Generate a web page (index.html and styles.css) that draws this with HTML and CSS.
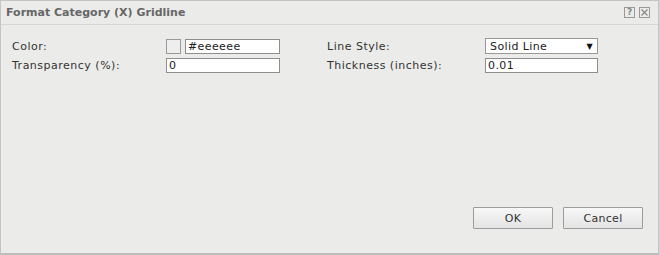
FILE: index.html
```html
<!DOCTYPE html>
<html lang="en">
  <head>
    <meta charset="utf-8" />
    <link rel="stylesheet" href="styles.css">
  </head>
  <body>

<div class="dialog">
  <div class="titlebar">
    <span class="title">Format Category (X) Gridline</span>
    <span class="tools">
      <span class="tool">?</span>
      <span class="tool">
        <svg width="9" height="9" viewBox="0 0 9 9"><path d="M1.5 1.5 L7.5 7.5 M7.5 1.5 L1.5 7.5" stroke="#888" stroke-width="1.2" fill="none"/></svg>
      </span>
    </span>
  </div>

  <div class="content">
    <div class="form">
      <label>Color:</label>
      <div class="colorfield">
        <span class="swatch"></span>
        <input class="box hex" type="text" value="#eeeeee">
      </div>
      <span></span>
      <label>Line Style:</label>
      <div class="box select">Solid Line <span class="arrow">&#9660;</span></div>

      <label>Transparency (%):</label>
      <input class="box" type="text" value="0">
      <span></span>
      <label>Thickness (inches):</label>
      <input class="box" type="text" value="0.01">
    </div>
  </div>

  <div class="buttons">
    <button>OK</button>
    <button>Cancel</button>
  </div>
</div>

  </body>
</html>
```

FILE: styles.css
```css
html, body{
	margin: 0;
	padding: 0;
}

body{
	font-family: "DejaVu Sans", Verdana, sans-serif;
	font-size: 11px;
	color: #333;
	background-color: #ebecea;
}

.dialog{
	box-sizing: border-box;
	width: 659px;
	height: 255px;
	display: flex;
	flex-direction: column;
	background-color: #ebecea;
	border: 1px solid #c4c4c4;
	border-bottom: 2px solid #bdbdbd;
}

.titlebar{
	height: 23px;
	display: flex;
	align-items: center;
	justify-content: space-between;
	padding: 0 7px 0 5px;
	border-bottom: 1px solid #d6d6d6;
}

.title{
	font-weight: bold;
	font-size: 11px;
	color: #666;
}

.tools{
	display: flex;
	gap: 4px;
	margin-right: 1px;
}

.tool{
	box-sizing: border-box;
	width: 11px;
	height: 11px;
	border: 1px solid #999;
	display: flex;
	align-items: center;
	justify-content: center;
	font-size: 9px;
	font-weight: bold;
	color: #888;
	line-height: 1;
}

.content{
	flex: 1;
	padding: 13px 0 0 11px;
}

.form{
	display: grid;
	grid-template-columns: 154px 114px 47px 158px 113px;
	row-gap: 4px;
	align-items: center;
}

label{
	color: #333;
	letter-spacing: 0.5px;
}

.box{
	box-sizing: border-box;
	height: 15px;
	border: 1px solid #8e8e8e;
	background-color: #fff;
	font-family: "DejaVu Sans", Verdana, sans-serif;
	font-size: 11px;
	letter-spacing: 0.4px;
	color: #222;
	padding: 0 2px;
	margin: 0;
	outline: none;
	width: 100%;
}

.colorfield{
	display: flex;
	gap: 4px;
}

.swatch{
	box-sizing: border-box;
	width: 15px;
	height: 15px;
	border: 1px solid #9a9a9a;
	background-color: #eeeeee;
	flex: none;
}

.hex{
	flex: 1;
	width: auto;
	min-width: 0;
}

.select{
	height: 16px;
	display: flex;
	align-items: center;
	justify-content: space-between;
	padding: 0 4px 0 4px;
	border-color: #999;
}

.arrow{
	font-size: 8px;
	color: #111;
}

.buttons{
	display: flex;
	justify-content: flex-end;
	gap: 10px;
	padding: 0 15px 24px 0;
}

button{
	width: 80px;
	height: 22px;
	font-family: "DejaVu Sans", Verdana, sans-serif;
	font-size: 11px;
	letter-spacing: 0.3px;
	color: #333;
	background: linear-gradient(#f7f7f7, #e4e4e4);
	border: 1px solid #9c9c9c;
	border-radius: 1px;
	padding: 0;
}
```
